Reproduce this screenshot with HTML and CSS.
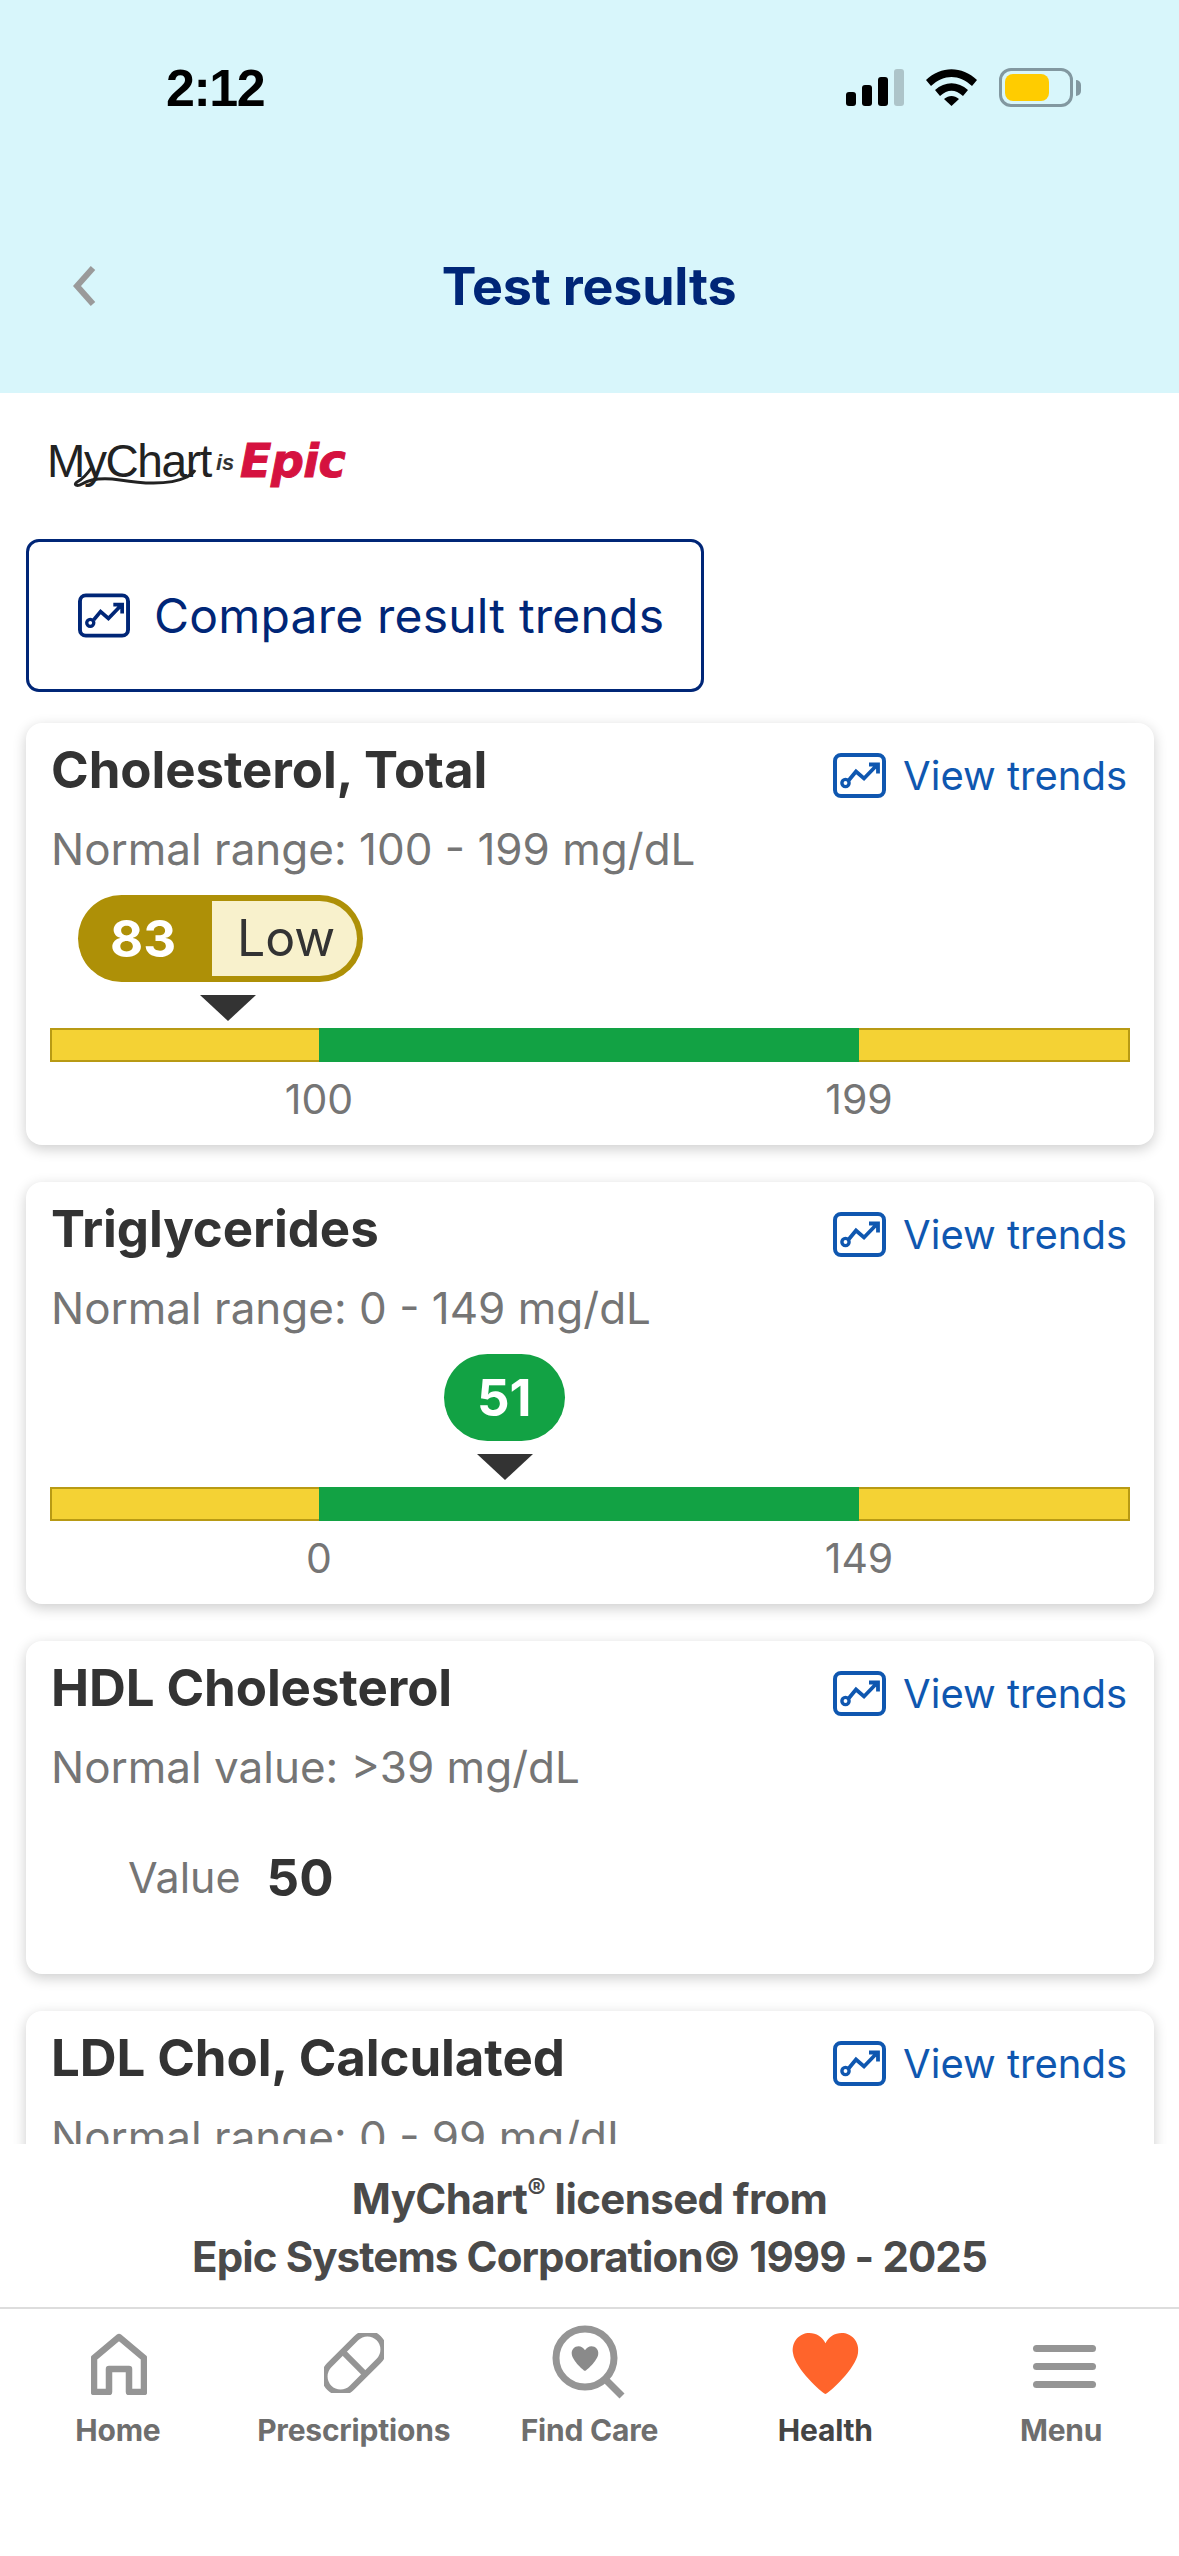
FILE: index.html
```html
<!DOCTYPE html>
<html>
    <head>
    <title>Test results</title>
    <link rel="stylesheet" href="styles.css">
    </head>
    <body>
    <svg class="defs" width="0" height="0">
        <symbol id="trend" viewBox="0 0 53 45">
            <rect x="2" y="2" width="49" height="41" rx="6" fill="none" stroke="currentColor" stroke-width="4"/>
            <circle cx="12.5" cy="30" r="3.6" fill="none" stroke="currentColor" stroke-width="3.4"/>
            <path d="M16 27 L23 18.5 L31 25.5 L44 12 M36 11.5 H45 V20.5" fill="none" stroke="currentColor" stroke-width="3.8"/>
        </symbol>
        <symbol id="heart" viewBox="0 0 68 60">
            <path d="M34 60 C30 59 4 35 2 20 C0 8 9 0 18 0 C25 0 31 4 34 10 C37 4 43 0 50 0 C59 0 68 8 66 20 C64 35 38 59 34 60Z" fill="currentColor"/>
        </symbol>
    </svg>
    <div id="page">
        <header id="top">
            <div class="status">
                <span class="time">2:12</span>
                <div class="signal">
                    <i class="b1"></i><i class="b2"></i><i class="b3"></i><i class="b4"></i>
                </div>
                <svg class="wifi" width="51" height="37" viewBox="0 0 51 37">
                    <path d="M0 11 C15 -3.500 36 -3.500 51 11 L46 17 C33 5 18 5 5 17Z" fill="#000"/>
                    <path d="M9 21 C19 12 32 12 42 21 L37 27 C29 20 22 20 14 27Z" fill="#000"/>
                    <path d="M18 30 C23 26 28 26 33 30 L25.500 37Z" fill="#000"/>
                </svg>
                <div class="battery"><div class="level"></div></div>
                <div class="nub"></div>
            </div>
            <div class="nav">
                <svg class="back" width="24" height="40" viewBox="0 0 24 40">
                    <path d="M20 2 L4 20 L20 38" fill="none" stroke="#9a9a9a" stroke-width="6"/>
                </svg>
                <h1>Test results</h1>
            </div>
        </header>

        <main id="content">
            <div class="logo">
                <span class="mychart">MyChart</span>
                <span class="is">is</span>
                <span class="epic">Epic</span>
                <svg class="swoosh" width="150" height="24" viewBox="0 0 150 24">
                    <path d="M44 2 C40 8 35 14 29 17 C25 20 29 22 34 19 C44 13 58 13 72 15 C90 18 120 21 139 12 C144 9 146 7 147 5" fill="none" stroke="#222" stroke-width="3"/>
                </svg>
            </div>

            <a class="compare">
                <svg class="trend-big" width="52" height="45"><use href="#trend"/></svg>
                Compare result trends
            </a>

            <section class="card">
                <div class="head">
                    <h2>Cholesterol, Total</h2>
                    <a class="trends"><svg width="53" height="45"><use href="#trend"/></svg>View trends</a>
                </div>
                <p class="range">Normal range: 100 - 199 mg/dL</p>
                <div class="marker" style="margin-left: 28px">
                    <div class="pill low"><b>83</b><span>Low</span></div>
                    <div class="arrow" style="margin-left: 122px"></div>
                </div>
                <div class="bar"><i></i><i class="ok"></i><i></i></div>
                <div class="scale"><span>100</span><span>199</span></div>
            </section>

            <section class="card">
                <div class="head">
                    <h2>Triglycerides</h2>
                    <a class="trends"><svg width="53" height="45"><use href="#trend"/></svg>View trends</a>
                </div>
                <p class="range">Normal range: 0 - 149 mg/dL</p>
                <div class="marker" style="margin-left: 394px">
                    <div class="pill good"><b>51</b></div>
                    <div class="arrow" style="margin-left: 33px"></div>
                </div>
                <div class="bar"><i></i><i class="ok"></i><i></i></div>
                <div class="scale"><span>0</span><span>149</span></div>
            </section>

            <section class="card">
                <div class="head">
                    <h2>HDL Cholesterol</h2>
                    <a class="trends"><svg width="53" height="45"><use href="#trend"/></svg>View trends</a>
                </div>
                <p class="range">Normal value: &gt;39 mg/dL</p>
                <div class="value"><span>Value</span><b>50</b></div>
            </section>

            <section class="card">
                <div class="head">
                    <h2>LDL Chol, Calculated</h2>
                    <a class="trends"><svg width="53" height="45"><use href="#trend"/></svg>View trends</a>
                </div>
                <p class="range">Normal range: 0 - 99 mg/dL</p>
            </section>
        </main>

        <footer id="bottom">
            <div class="licence">
                <div>MyChart<sup>®</sup> licensed from</div>
                <div>Epic Systems Corporation© 1999 - 2025</div>
            </div>
            <nav class="tabs">
                <a>
                    <span class="icon">
                    <svg class="home" width="56" height="62" viewBox="0 0 56 62">
                        <path d="M28 4 L53 25 V59 H38 V36 H18 V59 H3 V25Z" fill="none" stroke="#959595" stroke-width="6.500" stroke-linejoin="round"/>
                    </svg>
                    </span>
                    Home
                </a>
                <a>
                    <span class="icon">
                    <svg width="60" height="60" viewBox="0 0 60 60">
                        <g transform="rotate(-45 30 30)" fill="none" stroke="#959595" stroke-width="6">
                            <rect x="-5" y="14" width="70" height="32" rx="16"/>
                            <path d="M30 14 V46"/>
                        </g>
                    </svg>
                    </span>
                    Prescriptions
                </a>
                <a>
                    <span class="icon">
                    <svg class="find" width="74" height="74" viewBox="0 0 74 74">
                        <circle cx="33" cy="33" r="29" fill="none" stroke="#959595" stroke-width="7"/>
                        <path d="M54 55 L70 71" stroke="#959595" stroke-width="7"/>
                        <svg x="19" y="21" width="28" height="25" color="#8a8a8a"><use href="#heart"/></svg>
                    </svg>
                    </span>
                    Find Care
                </a>
                <a class="on">
                    <span class="icon">
                    <svg width="69" height="61" color="#ff642b"><use href="#heart"/></svg>
                    </span>
                    Health
                </a>
                <a>
                    <span class="icon">
                    <div class="burger"><i></i><i></i><i></i></div>
                    </span>
                    Menu
                </a>
            </nav>
        </footer>
    </div>
    </body>
</html>
```

FILE: styles.css
```css
* {
    box-sizing: border-box;
}
html, body {
    margin: 0;
    padding: 0;
}
body {
    font-family: Inter, "Liberation Sans", sans-serif;
    background-color: #fff;
}
.defs {
    position: absolute;
}
#page {
    width: 1179px;
    height: 2556px;
    display: flex;
    flex-direction: column;
    overflow: hidden;
}

/* header */
#top {
    height: 393px;
    background-color: #d8f6fb;
    flex: none;
}
.status {
    height: 256px;
    padding: 68px 98px 0 166px;
    display: flex;
    align-items: flex-start;
}
.time {
    font-family: "Liberation Sans", sans-serif;
    font-weight: 700;
    font-size: 52px;
    line-height: 40px;
    letter-spacing: -1.5px;
    width: 680px;
    color: #000;
}
.signal {
    display: flex;
    align-items: flex-end;
    gap: 6px;
    height: 37px;
    margin-top: 1px;
    width: 58px;
}
.signal i {
    width: 10px;
    border-radius: 3px;
    background-color: #000;
}
.signal .b1 { height: 14px; }
.signal .b2 { height: 21px; }
.signal .b3 { height: 29px; }
.signal .b4 { height: 37px; background-color: #adc4c9; }
.wifi {
    margin: 1px 0 0 22px;
}
.battery {
    width: 74px;
    height: 39px;
    margin-left: 22px;
    border: 3px solid #8298a0;
    border-radius: 12px;
    padding: 3px;
}
.level {
    width: 44px;
    height: 27px;
    background-color: #ffcc00;
    border-radius: 8px;
}
.nub {
    width: 5px;
    height: 16px;
    margin: 12px 0 0 3px;
    background-color: #8298a0;
    border-radius: 0 8px 8px 0;
}
.nav {
    display: flex;
    align-items: center;
    height: 60px;
    padding-left: 73px;
}
h1 {
    margin: 0 0 0 -8px;
    width: 1000px;
    text-align: center;
    font-size: 52px;
    font-weight: 700;
    letter-spacing: -.2px;
    color: #002677;
}

/* scrolling part */
#content {
    flex: 1;
    overflow: hidden;
    padding: 0 25px 0 26px;
}
.logo {
    position: relative;
    height: 146px;
    padding: 46px 0 0 21px;
    display: flex;
    align-items: flex-start;
    white-space: nowrap;
}
.mychart {
    font-family: "Liberation Sans", sans-serif;
    font-size: 46px;
    line-height: 44px;
    letter-spacing: -1.4px;
    color: #222;
    width: 169px;
}
.is {
    font-family: "Liberation Sans", sans-serif;
    font-weight: 700;
    font-style: italic;
    font-size: 22px;
    line-height: 44px;
    margin-top: 2px;
    color: #333;
    width: 24px;
}
.epic {
    font-family: "DejaVu Sans", sans-serif;
    font-weight: 700;
    font-style: italic;
    font-size: 46px;
    line-height: 44px;
    letter-spacing: -.5px;
    color: #d5123f;
    -webkit-text-stroke: 1px #d5123f;
}
.swoosh {
    position: absolute;
    left: 22px;
    top: 72px;
}
.compare {
    display: flex;
    align-items: center;
    gap: 24px;
    width: 678px;
    height: 153px;
    padding-left: 49px;
    border: 3px solid #002677;
    border-radius: 13px;
    font-size: 48px;
    letter-spacing: .2px;
    color: #002677;
    margin-bottom: 31px;
}
.card {
    background-color: #fff;
    border-radius: 16px;
    box-shadow: 0 4px 14px rgba(0, 0, 0, .2);
    padding: 17px 24px 22px;
    margin-bottom: 37px;
}
.head {
    display: flex;
    justify-content: space-between;
    align-items: center;
    height: 60px;
}
h2 {
    margin: 0 0 0 1px;
    font-size: 51px;
    line-height: 60px;
    font-weight: 700;
    letter-spacing: -.1px;
    color: #333;
}
.trends {
    display: flex;
    align-items: center;
    gap: 17px;
    font-size: 40px;
    color: #0f57b0;
    padding: 10px 3px 0 0;
}
.range {
    margin: 21px 0 0;
    padding-left: 1px;
    font-size: 44px;
    line-height: 56px;
    color: #757575;
}
.marker {
    margin-top: 18px;
    width: fit-content;
}
.pill {
    display: flex;
    height: 87px;
    border-radius: 44px;
    overflow: hidden;
    color: #fff;
    font-size: 51px;
    line-height: 87px;
}
.pill b {
    padding: 0 33px;
}
.pill.good {
    background-color: #12a244;
}
.pill.low {
    background-color: #ae9007;
    width: 285px;
}
.pill.low b {
    width: 134px;
    padding-left: 32px;
}
.pill.low span {
    flex: 1;
    margin: 6px 6px 6px 0;
    padding-left: 25px;
    font-size: 50px;
    line-height: 75px;
    background-color: #f8f1cc;
    color: #333;
    border-radius: 0 38px 38px 0;
}
.arrow {
    margin-top: 13px;
    width: 0;
    height: 0;
    border-left: 28px solid transparent;
    border-right: 28px solid transparent;
    border-top: 26px solid #333;
}
.bar {
    display: grid;
    grid-template-columns: 269px 540px 1fr;
    height: 34px;
    margin-top: 7px;
}
.bar i {
    background-color: #f4d234;
    border: 2px solid #b89a14;
}
.bar i.ok {
    background-color: #12a244;
    border: 0;
}
.bar i:first-child {
    border-right: 0;
}
.bar i:last-child {
    border-left: 0;
}
.scale {
    display: flex;
    justify-content: space-between;
    margin-top: 13px;
    padding: 0 calc(25% + 1px) 0 calc(25% - 1px);
    font-size: 41px;
    line-height: 48px;
    color: #757575;
}
.scale span {
    width: 0;
    display: flex;
    justify-content: center;
}
.value {
    display: flex;
    align-items: center;
    gap: 26px;
    height: 60px;
    margin-top: 52px;
    padding: 0 0 0 78px;
    margin-bottom: 45px;
    font-size: 43px;
    color: #757575;
}
.value b {
    font-size: 51px;
    color: #333;
}

/* footer */
#bottom {
    flex: none;
    height: 412px;
    background-color: #fff;
}
.licence {
    height: 165px;
    padding-top: 26px;
    text-align: center;
    font-size: 42px;
    line-height: 58px;
    font-weight: 700;
    letter-spacing: -.9px;
    color: #4a4a4a;
    border-bottom: 2px solid #ddd;
}
.licence div:first-child {
    letter-spacing: -.6px;
}
.licence sup {
    font-size: 28px;
    line-height: 0;
}
.tabs {
    display: grid;
    grid-template-columns: repeat(5, 1fr);
}
.tabs a {
    display: flex;
    flex-direction: column;
    align-items: center;
    font-size: 30px;
    font-weight: 700;
    line-height: 40px;
    letter-spacing: -.2px;
    color: #6e6e6e;
}
.tabs a.on {
    color: #444;
}
.icon {
    height: 101px;
    padding-top: 24px;
    display: flex;
    justify-content: center;
}
.home {
    margin-left: 2px;
}
.find {
    margin: -8px 0 0 0;
}
.burger {
    width: 63px;
    padding-top: 12px;
    margin-left: 6px;
}
.burger i {
    display: block;
    height: 7px;
    margin-bottom: 11px;
    border-radius: 4px;
    background-color: #959595;
}
```
